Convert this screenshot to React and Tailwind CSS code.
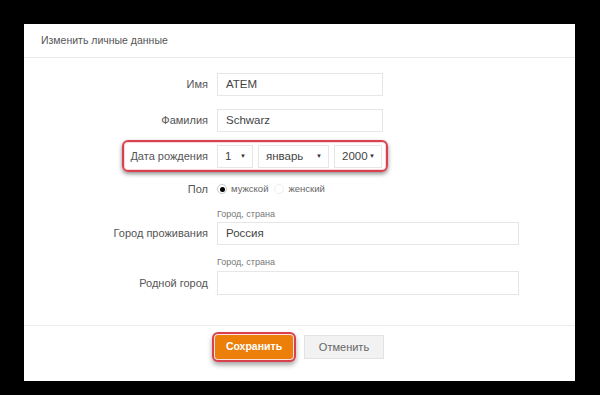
import React from "react";

const font = { fontFamily: '"Liberation Sans", Arial, sans-serif' };

function Label({ children }) {
  return (
    <div className="w-[184px] shrink-0 text-right text-[11px] text-[#555] leading-none">
      {children}
    </div>
  );
}

function Select({ value, w }) {
  return (
    <div
      className={`${w} h-[23px] border border-[#e6e6e6] flex items-center justify-between pl-[7px] pr-[6px] text-[11.5px] text-[#444]`}
    >
      <span>{value}</span>
      <span className="text-[6px] text-[#333]">▼</span>
    </div>
  );
}

export default function App() {
  return (
    <div className="w-[600px] h-[395px] bg-black pt-[24px] pl-[24px]" style={font}>
      <div className="w-[551px] h-[357px] bg-white flex flex-col">
        <div className="h-[34px] border-b border-[#e9e9e9] pl-[17px] flex items-center text-[10.5px] text-[#555]">
          Изменить личные данные
        </div>
        <div className="flex-1 flex flex-col pt-[15px]">
          <div className="flex items-center gap-[9px]">
            <Label>Имя</Label>
            <div className="w-[166px] h-[23px] border border-[#e6e6e6] flex items-center pl-[8px] text-[11.5px] text-[#444]">
              ATEM
            </div>
          </div>
          <div className="flex items-center gap-[9px] mt-[13px]">
            <Label>Фамилия</Label>
            <div className="w-[166px] h-[23px] border border-[#e6e6e6] flex items-center pl-[8px] text-[11.5px] text-[#444]">
              Schwarz
            </div>
          </div>
          <div className="relative flex items-center gap-[9px] mt-[13px]">
            <Label>Дата рождения</Label>
            <div className="flex gap-[5px]">
              <Select value="1" w="w-[36px]" />
              <Select value="январь" w="w-[71px]" />
              <Select value="2000" w="w-[48px]" />
            </div>
            <span className="absolute left-[98px] top-[-5px] w-[266px] h-[32px] rounded-[6px] border-2 border-[#d9414c] shadow-[0_2px_4px_rgba(0,0,0,0.45),inset_0_0_0_1px_#fbd6d9]" />
          </div>
          <div className="flex items-center gap-[9px] mt-[14px]">
            <Label>Пол</Label>
            <div className="flex items-center text-[9.5px] text-[#666]">
              <span className="w-[10px] h-[10px] rounded-full border border-[#ccc] flex items-center justify-center">
                <span className="w-[5px] h-[5px] rounded-full bg-black" />
              </span>
              <span className="ml-[4px]">мужской</span>
              <span className="ml-[6px] w-[10px] h-[10px] rounded-full border border-[#eee]" />
              <span className="ml-[4px]">женский</span>
            </div>
          </div>
          <div className="pl-[193px] mt-[14px] text-[9px] text-[#777] leading-none">Город, страна</div>
          <div className="flex items-center gap-[9px] mt-[3px]">
            <Label>Город проживания</Label>
            <div className="w-[302px] h-[23px] border border-[#e6e6e6] flex items-center pl-[8px] text-[11.5px] text-[#444]">
              Россия
            </div>
          </div>
          <div className="pl-[193px] mt-[13px] text-[9px] text-[#777] leading-none">Город, страна</div>
          <div className="flex items-center gap-[9px] mt-[4px]">
            <Label>Родной город</Label>
            <div className="w-[302px] h-[24px] border border-[#e6e6e6]" />
          </div>
        </div>
        <div className="h-[56px] border-t border-[#ececec] flex justify-center gap-[11px] pt-[9px]">
          <button className="w-[78px] h-[24px] rounded-[3px] bg-[#ec7f0a] text-white text-[10.5px] font-bold shadow-[0_0_0_1px_#fde0e0,0_0_0_3px_#d9414c,0_3px_5px_3px_rgba(0,0,0,0.35)]">
            Сохранить
          </button>
          <button className="w-[80px] h-[24px] bg-[#f2f2f2] border border-[#e3e3e3] text-[#666] text-[11px]">
            Отменить
          </button>
        </div>
      </div>
    </div>
  );
}
